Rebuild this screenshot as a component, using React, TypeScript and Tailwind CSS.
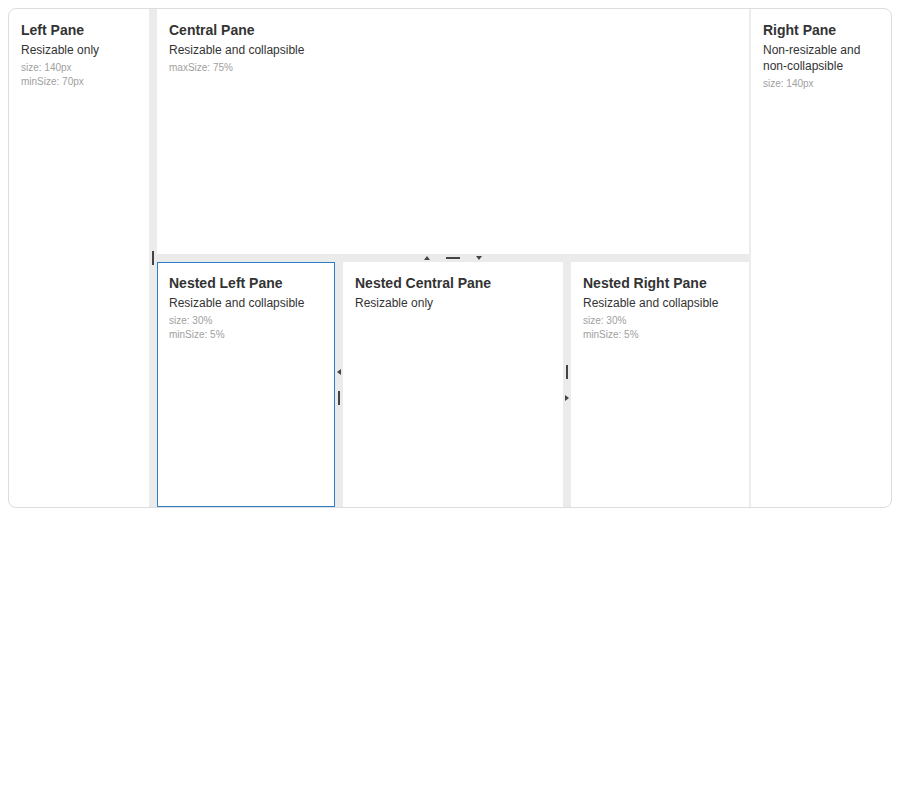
type PaneProps = {
  title: string;
  desc: string;
  meta?: string[];
};

function Pane({ title, desc, meta = [] }: PaneProps) {
  return (
    <div className="p-3">
      <h2 className="text-[14px] font-bold leading-[18px] text-[#333]">{title}</h2>
      <p className="mt-[3px] text-[12px] leading-4 text-[#333]">{desc}</p>
      <div className="mt-[3px]">
        {meta.map((m) => (
          <div key={m} className="text-[10px] leading-[14px] text-[#a0a0a0]">
            {m}
          </div>
        ))}
      </div>
    </div>
  );
}

function VBar() {
  return <div className="h-[14px] w-[2px] bg-[#444]" />;
}

function HBar() {
  return <div className="h-[2px] w-[14px] bg-[#444]" />;
}

function Arrow({ dir }: { dir: "up" | "down" | "left" | "right" }) {
  const shape = {
    up: "border-x-[3px] border-x-transparent border-b-[4px] border-b-[#444]",
    down: "border-x-[3px] border-x-transparent border-t-[4px] border-t-[#444]",
    left: "border-y-[3px] border-y-transparent border-r-[4px] border-r-[#444]",
    right: "border-y-[3px] border-y-transparent border-l-[4px] border-l-[#444]",
  }[dir];
  return (
    <div className="flex h-[14px] w-[14px] items-center justify-center">
      <div className={"h-0 w-0 " + shape} />
    </div>
  );
}

function App() {
  return (
    <div className="p-2 font-['Liberation_Sans',Arial,sans-serif]">
      <div className="flex h-[500px] overflow-hidden rounded-lg border border-[#dddddd] bg-white">
        {/* left */}
        <div className="w-[140px] shrink-0">
          <Pane title="Left Pane" desc="Resizable only" meta={["size: 140px", "minSize: 70px"]} />
        </div>
        <div className="flex w-2 shrink-0 items-center justify-center bg-[#ebebeb]">
          <VBar />
        </div>

        {/* central */}
        <div className="flex min-w-0 flex-1 flex-col">
          <div className="flex-1 basis-0">
            <Pane title="Central Pane" desc="Resizable and collapsible" meta={["maxSize: 75%"]} />
          </div>
          <div className="flex h-2 shrink-0 items-center justify-center gap-3 bg-[#ebebeb]">
            <Arrow dir="up" />
            <HBar />
            <Arrow dir="down" />
          </div>
          <div className="flex flex-1 basis-0">
            <div className="w-[178px] shrink-0 outline outline-1 -outline-offset-1 outline-[#2f7cc9]">
              <Pane
                title="Nested Left Pane"
                desc="Resizable and collapsible"
                meta={["size: 30%", "minSize: 5%"]}
              />
            </div>
            <div className="flex w-2 shrink-0 flex-col items-center justify-center gap-3 bg-[#ebebeb]">
              <Arrow dir="left" />
              <VBar />
            </div>
            <div className="min-w-0 flex-1">
              <Pane title="Nested Central Pane" desc="Resizable only" />
            </div>
            <div className="flex w-2 shrink-0 flex-col items-center justify-center gap-3 bg-[#ebebeb]">
              <VBar />
              <Arrow dir="right" />
            </div>
            <div className="w-[178px] shrink-0">
              <Pane
                title="Nested Right Pane"
                desc="Resizable and collapsible"
                meta={["size: 30%", "minSize: 5%"]}
              />
            </div>
          </div>
        </div>

        {/* right */}
        <div className="w-[2px] shrink-0 bg-[#ececec]" />
        <div className="w-[140px] shrink-0">
          <Pane title="Right Pane" desc="Non-resizable and non-collapsible" meta={["size: 140px"]} />
        </div>
      </div>
    </div>
  );
}

export default App;
